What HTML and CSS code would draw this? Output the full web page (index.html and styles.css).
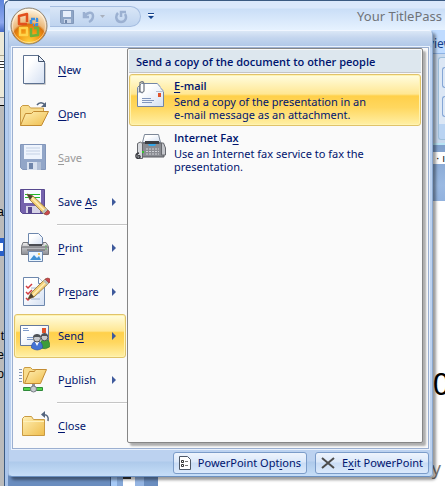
FILE: index.html
```html
<!DOCTYPE html>
<html lang="en">
<head>
    <meta charset="UTF-8">
    <meta name="viewport" content="width=device-width, initial-scale=1.0">
    <title>Your TitlePass</title>
    <link rel="stylesheet" href="styles.css">
</head>
<body>
    <svg width="0" height="0" class="defs" aria-hidden="true">
        <defs>
            <linearGradient id="paper" x1="0" y1="0" x2="1" y2="1">
                <stop offset="0.3" stop-color="#fff"/><stop offset="1" stop-color="#d3dff2"/>
            </linearGradient>
            <linearGradient id="folder" x1="0" y1="0" x2="1" y2="1">
                <stop offset="0" stop-color="#fff0b5"/><stop offset="1" stop-color="#efbd4c"/>
            </linearGradient>
            <linearGradient id="metal" x1="0" y1="0" x2="0" y2="1">
                <stop offset="0" stop-color="#f0f0f0"/><stop offset="0.5" stop-color="#b8b9bd"/><stop offset="1" stop-color="#8d8e94"/>
            </linearGradient>
            <radialGradient id="orb" cx="0.5" cy="0.95" r="0.9">
                <stop offset="0" stop-color="#ffd23c"/><stop offset="0.4" stop-color="#f0900f"/><stop offset="0.55" stop-color="#d9740f"/><stop offset="0.62" stop-color="#eab87a"/><stop offset="1" stop-color="#fff3dc"/>
            </radialGradient>
            <g id="pencil">
                <path d="M9 8l3 6 14 14 4-4L15 10z" fill="#f3cf78" stroke="#8d6f35" stroke-width=".8"/>
                <path d="M13 11l14 14" stroke="#fff0b8" stroke-width="1.5"/>
                <path d="M9 8l3 6 3-4z" fill="#4c4030"/>
                <path d="M24 26l4-4 2 2-4 4z" fill="#bcc0b8"/>
                <path d="M26 28l4-4q3 2 1 4t-5 0z" fill="#c9484c" stroke="#8a4034" stroke-width=".6"/>
            </g>
        </defs>
    </svg>

    <div class="desktop">
        <!-- document window that peeks out on the left -->
        <div class="behind">
            <div class="behind-title"></div>
            <div class="behind-tools"></div>
            <div class="behind-page">
                <span class="bit bit-a">a</span>
                <span class="bit bit-sel"></span>
                <span class="bit bit-t">t</span>
                <span class="bit bit-e">e</span>
                <span class="bit bit-o">o</span>
            </div>
        </div>

        <main class="window">
            <header class="titlebar">
                <div class="qat">
                    <button aria-label="Save">
                        <svg width="14" height="14" viewBox="0 0 14 14"><path d="M.5.5h13v13h-12l-1-1z" fill="#8ea5c6" stroke="#8298ba"/><path d="M3 1h8v6H3z" fill="#e6eefa"/><path d="M4 9h7v4H4z" fill="#c8d5e9"/><path d="M5 10h2v3H5z" fill="#7086a8"/></svg>
                    </button>
                    <button aria-label="Undo">
                        <svg width="24" height="14" viewBox="0 0 24 14"><path d="M2 2v5h5M2.500 6.500C5 2 11 1 11 6c0 3-2 5-4 6" fill="none" stroke="#9bb0d1" stroke-width="2.500"/><path d="M18 5h5l-2.500 3z" fill="#a9b0bd"/></svg>
                    </button>
                    <button aria-label="Redo">
                        <svg width="14" height="14" viewBox="0 0 14 14"><path d="M4 3C1 6 2 12 7 12s6-5 4-8M7 7V2h5" fill="none" stroke="#9bb0d1" stroke-width="2.500"/></svg>
                    </button>
                </div>
                <button class="customize" aria-label="Customize toolbar">
                    <svg width="6" height="7" viewBox="0 0 6 7"><path d="M0 0h6v1H0zM0 3h6L3 6z" fill="#15428b"/><path d="M0 1h6v1H0z" fill="#fff"/></svg>
                </button>
                <span class="title">Your TitlePass</span>
            </header>
            <div class="tabs">Review</div>
            <div class="ribbon"><div class="group"><i></i><i></i></div></div>
            <div class="ruler"><span>· ı</span></div>
            <div class="workspace">
                <div class="side"></div>
                <div class="vruler"><i></i></div>
                <div class="gap"></div>
                <div class="slide">
                    <span class="slide-title">0</span>
                    <span class="slide-sub">y</span>
                </div>
            </div>
        </main>

        <section class="menu">
            <div class="menu-body">
                <nav class="items">
                    <button class="item">
                        <svg width="32" height="32" viewBox="0 0 32 32"><path d="M5.500 1.500h15l6 6v22h-21z" fill="url(#paper)" stroke="#5d7190"/><path d="M20.500 1.500v6h6z" fill="#e8effb" stroke="#43536b"/><path d="M27.500 9v21.500H7" fill="none" stroke="#ccc"/></svg>
                        <span><u>N</u>ew</span>
                    </button>
                    <button class="item">
                        <svg width="32" height="32" viewBox="0 0 32 32"><path d="M2.500 27.500v-18l2-2h6l2 2.500h13v6" fill="#f8dc8c" stroke="#c99a42"/><path d="M2.500 27.500l5-12h6l2-2h15l-7 14z" fill="url(#folder)" stroke="#c28b32"/><path d="M19 7c2-3 6-3 8 0" fill="none" stroke="#54657e" stroke-width="1.500"/><path d="M28 4v5h-5z" fill="#54657e"/></svg>
                        <span><u>O</u>pen</span>
                    </button>
                    <button class="item" disabled>
                        <svg width="32" height="32" viewBox="0 0 32 32"><path d="M2.500 2.500h25v25h-23l-2-2z" fill="#92a6c8" stroke="#8397bb"/><path d="M6 3h18v14H6z" fill="#eef4fd"/><path d="M8 6h14M8 9h14M8 12h14" stroke="#c4d1e5"/><path d="M9 20h14v8H9z" fill="#d8e1ef"/><path d="M11 21h4v6h-4z" fill="#7086ab"/><path d="M19 20h4v8h-4z" fill="#b1bfd6"/></svg>
                        <span><u>S</u>ave</span>
                    </button>
                    <button class="item">
                        <svg width="32" height="32" viewBox="0 0 32 32"><path d="M2.500 3.500h24v24h-22l-2-2z" fill="#7562ad" stroke="#57488e"/><path d="M6 4h17v13H6z" fill="#f7f9ff"/><path d="M7 8.500h15M7 11.500h15" stroke="#20b82a"/><path d="M8 20h14v7H8z" fill="#d6d2e6"/><path d="M10 21h4v6h-4z" fill="#57488e"/><use href="#pencil"/></svg>
                        <span>Save <u>A</u>s</span>
                        <i class="arrow"></i>
                    </button>
                    <hr>
                    <button class="item">
                        <svg width="32" height="32" viewBox="0 0 32 32"><path d="M10.500 1.500h10l4 4v8h-14z" fill="url(#paper)" stroke="#6d87ad"/><path d="M5 10.500h5v2h15v-2h3l2.500 4v8h-27v-8z" fill="url(#metal)" stroke="#77787d"/><path d="M4 15h26M9 18h18" stroke="#606167"/><path d="M11 12h13v2H11z" fill="#4b4d53"/><path d="M27 14h2M27 17h2" stroke="#58b052"/><path d="M10.500 19.500h14v10h-14z" fill="#e9f5ff" stroke="#6d87ad"/><path d="M12 28l4-5 3 3 2-2 2 4z" fill="#3f91d4"/><circle cx="21" cy="22" r="1" fill="#f0b630"/></svg>
                        <span><u>P</u>rint</span>
                        <i class="arrow"></i>
                    </button>
                    <button class="item">
                        <svg width="32" height="32" viewBox="0 0 32 32"><path d="M5.500 1.500h15l6 6v22h-21z" fill="url(#paper)" stroke="#6d87ad"/><path d="M20.500 1.500v6h6" fill="#fff" stroke="#6d87ad"/><path d="M13 12h9M13 17h9M13 23h9" stroke="#a3b3cc"/><path d="M8 10l2 2 4-4M8 16l2 2 4-4M8 22l2 2 3-3" fill="none" stroke="#d23b40" stroke-width="1.500"/><use href="#pencil" transform="matrix(1 0 0 -1 1 31)"/></svg>
                        <span>Pr<u>e</u>pare</span>
                        <i class="arrow"></i>
                    </button>
                    <button class="item active">
                        <svg width="32" height="32" viewBox="0 0 32 32"><path d="M2.500 5.500h28v20h-28z" fill="url(#paper)" stroke="#65799c"/><path d="M5 8.500h5M5 10.500h6M9 17.500h7M9 19.500h6" stroke="#7f9bc9"/><path d="M24 8h4v5h-4z" fill="#e0532b"/><path d="M22.500 28v-5q1-4 4.500-4t4.500 4v4q-4 3-9 1z" fill="#3d9c3a" stroke="#29732a" stroke-width=".6"/><circle cx="26.500" cy="17.500" r="3.300" fill="#c7c9cc" stroke="#4d5156"/><path d="M23 16c0-4 7-4 7 0z" fill="#4d5156"/><path d="M13.500 28v-2q1-5 5.500-5t5.500 5v2q-5 4-11 0z" fill="#4474d5" stroke="#2c4c9f" stroke-width=".6"/><path d="M17 22l2 4 2-4z" fill="#fff"/><circle cx="19" cy="18.500" r="3.500" fill="#c7c9cc" stroke="#4d5156"/><path d="M15 17c0-4 8-4 8 0z" fill="#4d5156"/></svg>
                        <span>Sen<u>d</u></span>
                        <i class="arrow"></i>
                    </button>
                    <button class="item">
                        <svg width="32" height="32" viewBox="0 0 32 32"><path d="M1 5.500h3M1 8.500h3M1 11.500h3M1 14.500h3M1 17.500h3" stroke="#8597b5"/><path d="M5.500 19.500v-14l1-2h6l2 2h9v4" fill="#f8dc8c" stroke="#c99a42"/><path d="M6.500 19.500l5-12h5l1-2h11l-6 14z" fill="url(#folder)" stroke="#c28b32"/><path d="M14 20h3v4h-3z" fill="#8d9198"/><path d="M5.500 23.500h7v3h-7zM17.500 23.500h7v3h-7z" fill="#54d44c" stroke="#2f8a3a"/><circle cx="15.500" cy="25" r="3" fill="#c7cad0" stroke="#777c84"/></svg>
                        <span>P<u>u</u>blish</span>
                        <i class="arrow"></i>
                    </button>
                    <hr>
                    <button class="item">
                        <svg width="32" height="32" viewBox="0 0 32 32"><path d="M4.500 25.500v-17l2-2h7l2 3h11v16z" fill="url(#folder)" stroke="#c99a42"/><path d="M5 11.500h21" stroke="#fff0b8"/><path d="M25 5c4-1 6 2 5 6" fill="none" stroke="#54657e" stroke-width="1.500"/><path d="M27 1v7l-4-3.500z" fill="#54657e"/></svg>
                        <span><u>C</u>lose</span>
                    </button>
                </nav>
                <div class="submenu">
                    <h2>Send a copy of the document to other people</h2>
                    <button class="choice active">
                        <svg width="32" height="32" viewBox="0 0 32 32"><path d="M3.500 27.500v-19l4-4h16l6 8v15z" fill="url(#paper)" stroke="#7386a6"/><path d="M4 13l5 1M23.500 4.500l6 8H22" fill="none" stroke="#b3bfd3"/><path d="M24 14h3v4h-3z" fill="#e0532b"/><path d="M8 19.500h9M8 21.500h12M8 23.500h10" stroke="#8296bd"/><path d="M6 5v7q2 3 4 0V5q-1-4-4-1v-1M6 5q-1 4-.5 8" fill="none" stroke="#777d88" stroke-width="1.300"/></svg>
                        <span class="text"><b><u>E</u>-mail</b>Send a copy of the presentation in an<br>e-mail message as an attachment.</span>
                    </button>
                    <button class="choice">
                        <svg width="32" height="32" viewBox="0 0 32 32"><path d="M10.500 3.500h14l2 8h-18z" fill="url(#paper)" stroke="#7c8797"/><path d="M8 12h20l2 5v9H6v-9z" fill="#8a8c92" stroke="#5b5d62"/><path d="M3.500 12.500q3-3 5 0v15h-5z" fill="#d8dade" stroke="#66686d"/><path d="M27.500 12h2l2 5v7h-4z" fill="#c3c5ca" stroke="#66686e"/><path d="M11 10h14v3H11z" fill="#3c3e43"/><path d="M14 13h8l-1 2h-6z" fill="#34a7e8"/><path d="M12 18h13M12 20.500h13M12 23h13" stroke="#d0d2d6" stroke-dasharray="2 1"/><path d="M8 20h2v2H8z" fill="#35c42d"/><path d="M5 22c-5 1-3 7 0 5 2-1 1-3-1-2" fill="none" stroke="#393b40" stroke-width="1.400"/></svg>
                        <span class="text"><b>Internet Fa<u>x</u></b>Use an Internet fax service to fax the<br>presentation.</span>
                    </button>
                </div>
            </div>
            <footer class="menu-footer">
                <button>
                    <svg width="12" height="14" viewBox="0 0 12 14"><path d="M.5.500h8l3 3v10H.5z" fill="#fff" stroke="#4d5766"/><path d="M2.500 4.500h2v2h-2zM2.500 8.500h2v2h-2z" fill="none" stroke="#333"/><path d="M6 5.500h3M6 9.500h3" stroke="#777"/></svg>
                    <span>PowerPoint Opt<u>i</u>ons</span>
                </button>
                <button>
                    <svg width="14" height="12" viewBox="0 0 14 12"><path d="M1 1l12 10M13 1L1 11" stroke="#4c4c4c" stroke-width="2"/></svg>
                    <span>E<u>x</u>it PowerPoint</span>
                </button>
            </footer>
        </section>

        <button class="orb" aria-label="Office Button">
            <svg width="38" height="38" viewBox="0 0 38 38">
                <circle cx="19" cy="19" r="18" fill="url(#orb)" stroke="#8d8272"/>
                <circle cx="19" cy="19" r="16.500" fill="none" stroke="#fff" stroke-opacity=".45"/>
                <g fill="none" stroke-width="2.500" stroke-linejoin="round">
                    <path d="M17 17H9V9q4-1 8-2v8" stroke="#e2501c"/>
                    <path d="M21 17v-5h6v6h-4" stroke="#3d8fe0" stroke-dasharray="4 1"/>
                    <path d="M17 21v7H10v-7z" stroke="#ffd34a"/>
                    <path d="M21 21v8l7-1v-7h-4" stroke="#6cb33a"/>
                </g>
            </svg>
        </button>
    </div>
</body>
</html>
```

FILE: styles.css
```css
* {
    box-sizing: border-box;
}

body {
    margin: 0;
    font-family: "Noto Sans", "Open Sans", sans-serif;
    font-size: 11px;
    color: #00156e;
}

.defs {
    position: absolute;
}

button {
    font: inherit;
    color: inherit;
    background: none;
    border: none;
    padding: 0;
    text-align: left;
}

u {
    text-underline-offset: 2px;
}

.desktop {
    position: relative;
    display: flex;
    height: 100vh;
    overflow: hidden;
}

/* window behind */
.behind {
    width: 4px;
    display: flex;
    flex-direction: column;
    overflow: hidden;
    background: #bbb;
}

.behind-title {
    height: 32px;
    background: linear-gradient(#5f86dc, #8ea8ee 70%, #4569c5);
}

.behind-tools {
    height: 74px;
    background: linear-gradient(#ece9d8 23px, #aaa590 23px 24px, #ece9d8 24px 28px, #fff 28px 29px, #333 29px 30px, #fff 30px 32px, #333 32px 33px, #fff 33px 35px, #333 35px 36px, #fff 36px 38px, #ece9d8 38px 65px, #888 65px 66px, #ddd 66px 73px, #000 73px);
}

.behind-page {
    position: relative;
    flex: 1;
    font: 12px "Liberation Sans", sans-serif;
    color: #000;
}

.bit {
    position: absolute;
    right: 0;
}

.bit-a { top: 99px; }
.bit-t { top: 223px; }
.bit-e { top: 242px; }
.bit-o { top: 261px; }

.bit-sel {
    top: 132px;
    width: 4px;
    height: 18px;
    border: solid #2a60c8;
    border-width: 5px 1px 5px 0;
    background: #fff;
}

/* main window */
.window {
    flex: 1;
    display: flex;
    flex-direction: column;
    min-width: 0;
    padding-left: 3px;
    border-left: 1px solid #3b5a82;
    border-top: 1px solid #3b5a82;
    border-top-left-radius: 6px;
    background: linear-gradient(#dbe8fb, #b4cdf0 60px, #a9c4ea);
}

.titlebar {
    height: 29px;
    display: flex;
    align-items: center;
    padding: 2px 3px 0 42px;
    background: linear-gradient(#dbe8fb 0 7px, #cadef7 8px, #e6f2ff);
}

.qat {
    display: flex;
    align-items: center;
    gap: 8px;
    width: 91px;
    height: 21px;
    padding-left: 10px;
    border: 1px solid #a5bde0;
    border-left: none;
    border-radius: 0 11px 11px 0;
    background: linear-gradient(#d9e6f7, #bfd4ef);
}

.qat button,
.customize {
    display: flex;
}

.customize {
    margin-left: 7px;
}

.title {
    margin-left: auto;
    padding-bottom: 2px;
    font-size: 13px;
    color: #6f7378;
}

.tabs {
    height: 24px;
    line-height: 28px;
    text-align: right;
    font-size: 12px;
    color: #15428b;
    background: #bfdbff;
    border-bottom: 1px solid #8db2e3;
    margin-right: -8px;
}

.ribbon {
    height: 91px;
    display: flex;
    justify-content: flex-end;
    padding: 3px 0;
    background: #c7d8ed;
    border-bottom: 2px solid #b8e4f4;
}

.group {
    width: 7px;
    padding: 9px 0 0 3px;
    display: flex;
    flex-direction: column;
    gap: 8px;
    border: solid #9ebfdb;
    border-width: 1px 0 1px 1px;
    border-radius: 3px 0 0 3px;
    background: linear-gradient(#dce7f5 66px, #b9d3f2 66px);
}

.group i {
    height: 21px;
    border: 1px solid #86a7d6;
    border-right: none;
    border-radius: 3px 0 0 3px;
}

.ruler {
    height: 56px;
    padding-top: 7px;
    text-align: right;
    background: linear-gradient(#7f9fcb, #9ab9e2 40px, #92b2de);
}

.ruler span {
    display: block;
    height: 12px;
    line-height: 12px;
    background: #fff;
    color: #222;
}

.workspace {
    flex: 1;
    display: flex;
    background: #6a8dbf;
}

.side {
    width: 103px;
    border-right: 1px solid #46638f;
}

.vruler {
    display: flex;
    align-items: flex-end;
    width: 24px;
    padding: 0 2px 7px 6px;
    border-left: 6px solid #a6caf7;
    background: linear-gradient(to right, #85a8d8 6px, #fff 6px);
}

.vruler i {
    width: 8px;
    height: 2px;
    background: #333;
}

.gap {
    width: 23px;
    background: linear-gradient(to right, #95b5e2 9px, #6a8dbf 9px);
}

.slide {
    position: relative;
    flex: 1;
    background: #fff;
}

.slide-title,
.slide-sub {
    position: absolute;
    font-size: 30px;
    line-height: 38px;
    color: #000;
}

.slide-title {
    top: 164px;
    right: -5px;
}

.slide-sub {
    top: 248px;
    right: 4px;
    font-size: 18px;
    color: #777;
}

/* office menu */
.menu {
    position: absolute;
    top: 30px;
    left: 8px;
    right: 12px;
    padding: 16px 3px 0;
    border: 1px solid #88a5cc;
    border-color: #f0f6ff #8ba8cf #6c91c1 #a7bfe1;
    border-radius: 4px;
    background: linear-gradient(#dbe7f6, #c3d5ee 7px, #afc7e8 16px, #bcd2f0 17px, #bcd2f0 430px, #aecaeb 431px, #c6def8);
    box-shadow: 3px 3px 3px rgba(0, 0, 0, 0.4);
}

.menu-body {
    display: flex;
    border: 1px solid #9bafd0;
    background: #fafafa;
    outline: 1px solid #eaf2fd;
}

.items {
    width: 114px;
    padding-left: 1px;
}

.item {
    display: flex;
    align-items: center;
    width: 112px;
    height: 44px;
    padding-left: 3px;
    border: 1px solid transparent;
    border-radius: 3px;
    color: #00156e;
}

.item svg {
    margin-right: 8px;
}

.item span {
    padding-bottom: 2px;
}

.item:disabled {
    color: #999;
}

.item.active,
.choice.active {
    border-color: #e0c36a;
    background: linear-gradient(#fffde0, #ffe793 38%, #ffd04a 42%, #ffd75f 65%, #fff0a6);
    box-shadow: inset 0 0 0 1px #fff3b0;
}

.arrow {
    margin-left: auto;
    margin-right: 9px;
    border: 4px solid transparent;
    border-left-color: #3f5a9c;
    border-right: none;
}

.items hr {
    height: 2px;
    margin: 0 0 0 43px;
    border: none;
    border-top: 1px solid #c5c5c5;
    background: #fff;
}

.submenu {
    flex: 1;
    margin: 0 5px 5px 0;
    padding: 1px;
    border: 1px solid #868686;
    border-radius: 2px;
    background: #fafafa;
    box-shadow: 3px 3px 2px rgba(0, 0, 0, 0.3);
}

.submenu h2,
.choice b {
    font-family: "Open Sans", "Noto Sans", sans-serif;
    font-weight: 600;
}

.submenu h2 {
    height: 23px;
    margin: 0 0 1px;
    padding-left: 7px;
    line-height: 23px;
    font-size: 11px;
    background: #dde7ee;
    border-bottom: 1px solid #c5c5c5;
}

.choice {
    display: flex;
    width: 100%;
    height: 52px;
    padding: 4px 6px 0 4px;
    border: 1px solid transparent;
    border-radius: 3px;
}

.choice svg {
    margin-right: 8px;
}

.choice .text {
    line-height: 13px;
}

.choice b {
    display: block;
    margin-bottom: 3px;
}

.menu-footer {
    display: flex;
    justify-content: flex-end;
    gap: 8px;
    padding: 3px 0 2px;
}

.menu-footer button {
    display: flex;
    align-items: center;
    gap: 7px;
    height: 22px;
    padding: 0 5px;
    border: 1px solid #7b9cc9;
    border-radius: 3px;
    background: linear-gradient(#eef4fd, #dbe8f9 45%, #c9dcf5 50%, #dceafc);
}

.menu-footer span {
    padding-bottom: 1px;
}

.orb {
    position: absolute;
    top: 7px;
    left: 10px;
    display: flex;
}
```
